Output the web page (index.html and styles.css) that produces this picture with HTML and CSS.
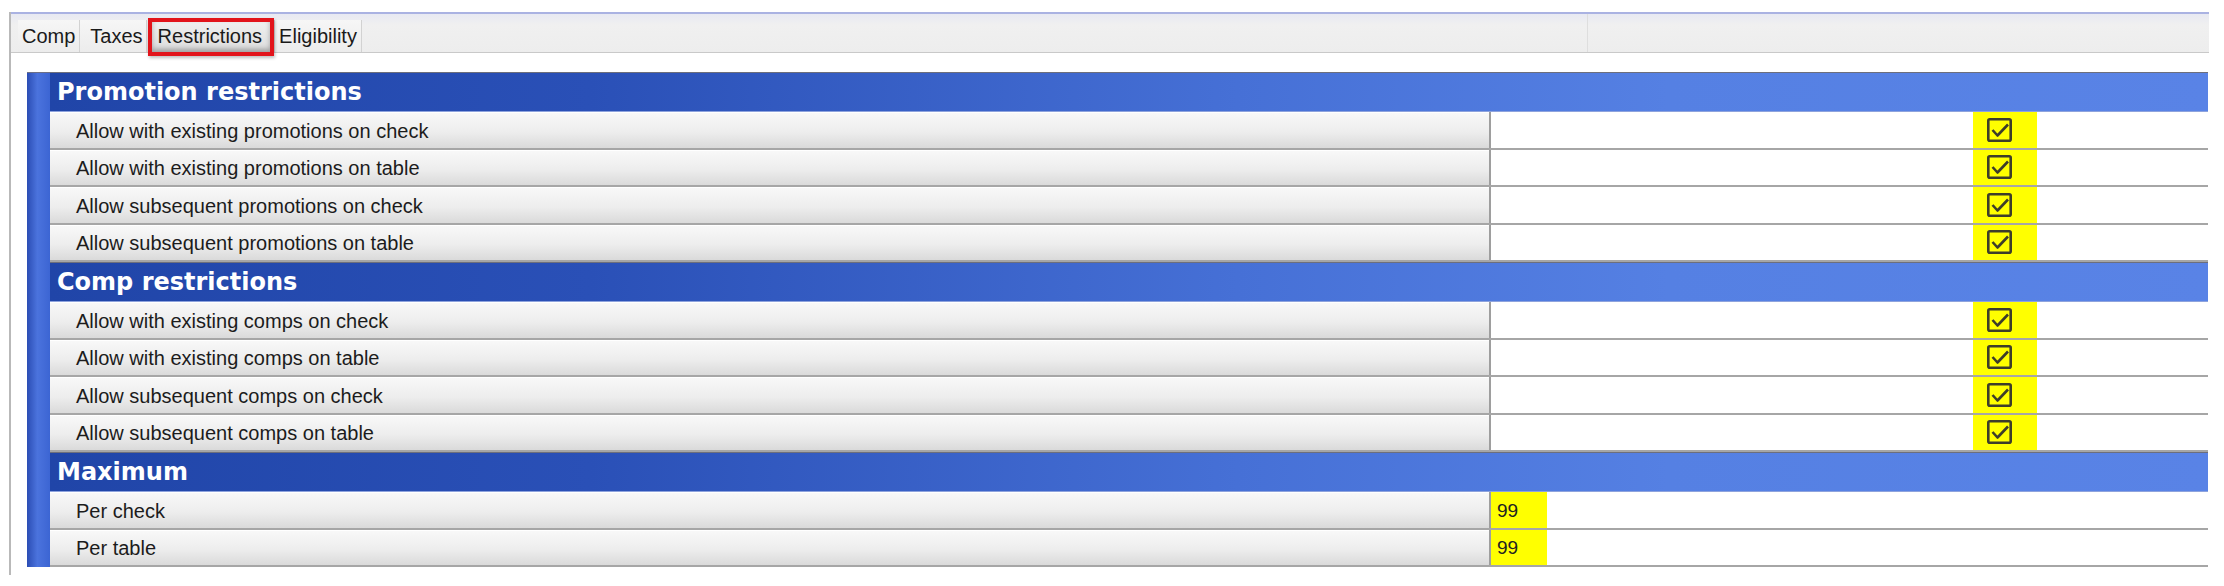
FILE: index.html
```html
<!DOCTYPE html>
<html lang="en">
<head>
    <meta charset="UTF-8">
    <title>Promotion - Restrictions</title>
    <link rel="stylesheet" href="styles.css">
</head>
<body>
    <div class="window">
        <div class="tabs">
            <div class="tab tab-comp">Comp</div>
            <div class="tab tab-taxes">Taxes</div>
            <div class="tab tab-restrictions is-active">Restrictions</div>
            <div class="tab tab-eligibility">Eligibility</div>
            <div class="tab-fill"></div>
        </div>

        <div class="panel">
            <div class="rail"></div>
            <div class="sections">
                <!-- Promotion restrictions -->
                <div class="section-title">Promotion restrictions</div>
                <div class="row">
                    <div class="label">Allow with existing promotions on check</div>
                    <div class="value"><span class="flag"><svg viewBox="0 0 25 24"><rect x="1.3" y="1.3" width="22.4" height="21.4" rx="1.5"/><path d="M5.5 12 L10.5 17.5 L21 6.5"/></svg></span></div>
                </div>
                <div class="row">
                    <div class="label">Allow with existing promotions on table</div>
                    <div class="value"><span class="flag"><svg viewBox="0 0 25 24"><rect x="1.3" y="1.3" width="22.4" height="21.4" rx="1.5"/><path d="M5.5 12 L10.5 17.5 L21 6.5"/></svg></span></div>
                </div>
                <div class="row">
                    <div class="label">Allow subsequent promotions on check</div>
                    <div class="value"><span class="flag"><svg viewBox="0 0 25 24"><rect x="1.3" y="1.3" width="22.4" height="21.4" rx="1.5"/><path d="M5.5 12 L10.5 17.5 L21 6.5"/></svg></span></div>
                </div>
                <div class="row">
                    <div class="label">Allow subsequent promotions on table</div>
                    <div class="value"><span class="flag"><svg viewBox="0 0 25 24"><rect x="1.3" y="1.3" width="22.4" height="21.4" rx="1.5"/><path d="M5.5 12 L10.5 17.5 L21 6.5"/></svg></span></div>
                </div>

                <!-- Comp restrictions -->
                <div class="section-title">Comp restrictions</div>
                <div class="row">
                    <div class="label">Allow with existing comps on check</div>
                    <div class="value"><span class="flag"><svg viewBox="0 0 25 24"><rect x="1.3" y="1.3" width="22.4" height="21.4" rx="1.5"/><path d="M5.5 12 L10.5 17.5 L21 6.5"/></svg></span></div>
                </div>
                <div class="row">
                    <div class="label">Allow with existing comps on table</div>
                    <div class="value"><span class="flag"><svg viewBox="0 0 25 24"><rect x="1.3" y="1.3" width="22.4" height="21.4" rx="1.5"/><path d="M5.5 12 L10.5 17.5 L21 6.5"/></svg></span></div>
                </div>
                <div class="row">
                    <div class="label">Allow subsequent comps on check</div>
                    <div class="value"><span class="flag"><svg viewBox="0 0 25 24"><rect x="1.3" y="1.3" width="22.4" height="21.4" rx="1.5"/><path d="M5.5 12 L10.5 17.5 L21 6.5"/></svg></span></div>
                </div>
                <div class="row">
                    <div class="label">Allow subsequent comps on table</div>
                    <div class="value"><span class="flag"><svg viewBox="0 0 25 24"><rect x="1.3" y="1.3" width="22.4" height="21.4" rx="1.5"/><path d="M5.5 12 L10.5 17.5 L21 6.5"/></svg></span></div>
                </div>

                <!-- Maximum -->
                <div class="section-title">Maximum</div>
                <div class="row">
                    <div class="label">Per check</div>
                    <div class="value value-num"><span class="num">99</span></div>
                </div>
                <div class="row">
                    <div class="label">Per table</div>
                    <div class="value value-num"><span class="num">99</span></div>
                </div>
            </div>
        </div>
    </div>
</body>
</html>
```

FILE: styles.css
```css
* {
    margin: 0;
    padding: 0;
    box-sizing: border-box;
}

body {
    width: 2224px;
    height: 586px;
    overflow: hidden;
    background: #fff;
    font-family: 'Liberation Sans', Arial, sans-serif;
    color: #1c1c1c;
}

.window {
    margin: 12px 0 0 9px;
    width: 2200px;
    height: 563px;
    border-left: 2px solid #b9b9b9;
}

/* tab strip */
.tabs {
    display: flex;
    align-items: flex-end;
    height: 41px;
    padding-left: 7px;
    background: linear-gradient(#e8e9f2, #f0f0f0 30%, #ededed);
    border-top: 2px solid #aab2e2;
    border-bottom: 1px solid #c9c9c9;
}

.tab {
    display: flex;
    align-items: center;
    height: 32px;
    font-size: 20px;
    color: #1a1a1a;
    background: linear-gradient(#f6f6f6, #ececec);
    border-right: 1px solid #d2d2d2;
    white-space: nowrap;
}

.tab-comp { padding: 0 4px 0 4px; }
.tab-taxes { padding: 0 3px 0 10px; }
.tab-restrictions { padding: 0 12px 0 11px; }
.tab-eligibility { padding: 0 4px 0 4px; }

.tab.is-active {
    position: relative;
    background: linear-gradient(#f1f1f1, #dcdcdc);
}

.tab.is-active::after {
    content: "";
    position: absolute;
    top: -2px;
    bottom: -4px;
    left: 1px;
    right: 0;
    border: 4px solid #e2141b;
    box-shadow: inset 0 -3px 5px rgba(0, 0, 0, 0.28), 1px 2px 3px rgba(0, 0, 0, 0.25);
}

.tab-fill {
    flex: 0 0 1226px;
    align-self: stretch;
    border-right: 1px solid #dedede;
}

/* property grid */
.panel {
    display: flex;
    width: 2181px;
    margin: 19px 0 0 16px;
}

.rail {
    width: 23px;
    background: linear-gradient(90deg, #2b4db4, #4b73dd 45%, #3c65d3);
    border-top: 1px solid #6c6f86;
}

.sections {
    flex: 1;
}

.section-title {
    display: flex;
    align-items: center;
    height: 40px;
    padding-left: 7px;
    font-family: 'DejaVu Sans', Verdana, sans-serif;
    font-weight: bold;
    font-size: 24px;
    color: #fff;
    background: linear-gradient(90deg, #2045a8 0%, #2a50b7 25%, #4670d6 55%, #5580e3 75%, #5983e6 100%);
    border-top: 1px solid #6d6f7c;
    border-bottom: 1px solid #8ea3dd;
}

.row {
    display: grid;
    grid-template-columns: 1439px 1fr;
    height: 37.5px;
    border-bottom: 2px solid #a6a6a6;
}

.label {
    display: flex;
    align-items: center;
    padding: 2px 0 0 26px;
    font-size: 20px;
    white-space: nowrap;
    background: linear-gradient(#f8f8f8, #ededed 55%, #dadada);
    border-top: 1px solid #fff;
}

.value {
    display: flex;
    padding-left: 482px;
    background: #fff;
    border-left: 2px solid #9e9e9e;
}

.value-num {
    padding-left: 0;
}

.flag {
    display: flex;
    align-items: center;
    width: 64px;
    padding-left: 14px;
    background: #ffff00;
}

.flag svg {
    width: 25px;
    height: 24px;
    fill: none;
    stroke: #3d3d2a;
    stroke-width: 2.6;
    stroke-linejoin: round;
}

.num {
    display: flex;
    align-items: center;
    width: 56px;
    padding: 2px 0 0 6px;
    font-size: 19px;
    color: #222;
    background: #ffff00;
}
```
